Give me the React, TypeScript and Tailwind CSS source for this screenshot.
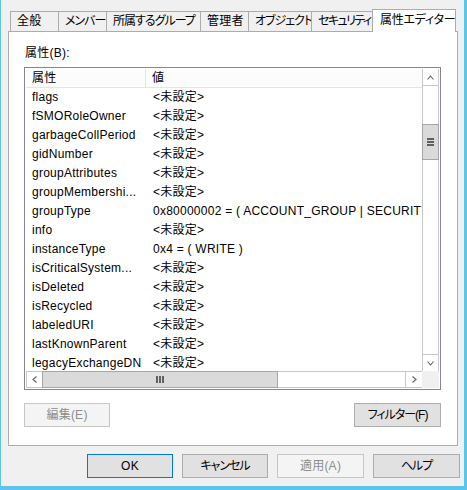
import React from "react";

const FONT = { fontFamily: '"Liberation Sans", "Noto Sans CJK JP", sans-serif' };

const tabs: { label: string; w: string; track?: string }[] = [
  { label: "全般", w: "w-[48px]" },
  { label: "メンバー", w: "w-[48px]", track: "tracking-[-1px]" },
  { label: "所属するグループ", w: "w-[94px]", track: "tracking-[-1px]" },
  { label: "管理者", w: "w-[48px]" },
  { label: "オブジェクト", w: "w-[63px]", track: "tracking-[-1px]" },
  { label: "セキュリティ", w: "w-[61px]", track: "tracking-[-1.6px]" },
];

const NOT_SET = "<未設定>";

const rows: [string, string][] = [
  ["flags", NOT_SET],
  ["fSMORoleOwner", NOT_SET],
  ["garbageCollPeriod", NOT_SET],
  ["gidNumber", NOT_SET],
  ["groupAttributes", NOT_SET],
  ["groupMembershi...", NOT_SET],
  ["groupType", "0x80000002 = ( ACCOUNT_GROUP | SECURITY_ENABLED )"],
  ["info", NOT_SET],
  ["instanceType", "0x4 = ( WRITE )"],
  ["isCriticalSystem...", NOT_SET],
  ["isDeleted", NOT_SET],
  ["isRecycled", NOT_SET],
  ["labeledURI", NOT_SET],
  ["lastKnownParent", NOT_SET],
  ["legacyExchangeDN", NOT_SET],
];

const Chevron: React.FC<{ dir: "up" | "down" | "left" | "right" }> = ({ dir }) => {
  const pts =
    dir === "up"
      ? "0.5,4.5 3.5,1 6.5,4.5"
      : dir === "down"
      ? "0.5,0.5 3.5,4 6.5,0.5"
      : dir === "left"
      ? "4.5,0.5 1,3.5 4.5,6.5"
      : "0.5,0.5 4,3.5 0.5,6.5";
  const vertical = dir === "up" || dir === "down";
  return (
    <svg
      width={vertical ? 7 : 5}
      height={vertical ? 5 : 7}
      viewBox={vertical ? "0 0 7 5" : "0 0 5 7"}
      fill="none"
      stroke="#606060"
      strokeWidth="1.1"
    >
      <polyline points={pts} />
    </svg>
  );
};

const Button: React.FC<{
  label: string;
  w: string;
  disabled?: boolean;
  primary?: boolean;
  tight?: boolean;
}> = ({ label, w, disabled, primary, tight }) => (
  <div
    className={`${w} h-[24px] flex items-center justify-center border text-[12px] ${
      tight ? "tracking-[-1px]" : ""
    } ${
      disabled
        ? "bg-[#f4f4f4] border-[#c6c6c6] text-[#8d8d8d]"
        : primary
        ? "bg-[#e1e1e1] border-[#0078d7] text-black"
        : "bg-[#e1e1e1] border-[#adadad] text-black"
    }`}
  >
    {label}
  </div>
);

export default function App() {
  return (
    <div
      style={FONT}
      className="w-[467px] h-[490px] bg-[#f0f0f0] border-l border-r-[3px] border-b-[4px] border-[#5fc4ea] flex flex-col text-black tracking-[0.25px] [font-feature-settings:'palt']"
    >
      {/* tabs */}
      <div className="h-[31px] pl-[9px] flex items-end">
        {tabs.map((t) => (
          <div
            key={t.label}
            className={`${t.w} h-[20px] border-t border-l border-[#acacac] bg-[#f0f0f0] pl-[6px] text-[12px] leading-[19px] whitespace-nowrap overflow-hidden ${
              t.track ?? ""
            }`}
          >
            {t.label}
          </div>
        ))}
        <div className="w-[84px] h-[23px] -mb-px relative z-10 border-t border-x border-[#acacac] bg-white pl-[7px] text-[12px] leading-[21px] whitespace-nowrap tracking-[-0.3px]">
          属性エディター
        </div>
      </div>

      {/* panel */}
      <div className="ml-[7px] w-[450px] h-[415px] border border-[#acacac] bg-white pl-[15px] pt-[13px] flex flex-col">
        <div className="pl-px text-[12px] leading-[16px]">属性(B):</div>

        <div className="mt-[6px] w-[417px] h-[323px] border border-[#828790] p-px flex flex-col">
          <div className="flex h-[302px]">
            {/* rows */}
            <div className="w-[396px] overflow-hidden">
              <div className="h-[19px] flex bg-[#fcfcfc] border-b border-[#e5e5e5] text-[12px] leading-[18px]">
                <div className="w-[120px] pl-[6px] border-r border-[#e5e5e5]">属性</div>
                <div className="pl-[6px]">値</div>
              </div>
              {rows.map(([name, val]) => (
                <div key={name} className="h-[19px] flex text-[12px] leading-[19px] whitespace-nowrap">
                  <div className="w-[121px] shrink-0 pl-[6px] overflow-hidden">{name}</div>
                  <div className="pl-[6px]">{val}</div>
                </div>
              ))}
            </div>
            {/* vertical scrollbar */}
            <div className="w-[17px] border-x border-[#c8c8c8] bg-white flex flex-col">
              <div className="h-[17px] border-b border-[#c8c8c8] flex items-center justify-center">
                <Chevron dir="up" />
              </div>
              <div className="h-[38px]" />
              <div className="h-[36px] -mx-px bg-[#dadada] border border-[#a6a6a6] flex flex-col items-center justify-center gap-px">
                <div className="w-[7px] h-[2px] bg-[#606060]" />
                <div className="w-[7px] h-[2px] bg-[#606060]" />
                <div className="w-[7px] h-[2px] bg-[#606060]" />
              </div>
              <div className="flex-1" />
              <div className="h-[17px] border-t border-[#c8c8c8] flex items-center justify-center">
                <Chevron dir="down" />
              </div>
            </div>
          </div>
          {/* horizontal scrollbar */}
          <div className="flex h-[17px]">
            <div className="w-[396px] border-y border-[#c8c8c8] bg-white flex">
              <div className="w-[17px] border-x border-[#c8c8c8] flex items-center justify-center">
                <Chevron dir="left" />
              </div>
              <div className="w-[236px] -my-px -ml-px bg-[#dadada] border border-[#a6a6a6] flex items-center justify-center gap-px">
                <div className="w-[2px] h-[7px] bg-[#606060]" />
                <div className="w-[2px] h-[7px] bg-[#606060]" />
                <div className="w-[2px] h-[7px] bg-[#606060]" />
              </div>
              <div className="flex-1" />
              <div className="w-[17px] border-l border-[#c8c8c8] flex items-center justify-center">
                <Chevron dir="right" />
              </div>
            </div>
            <div className="w-[17px] bg-[#f0f0f0]" />
          </div>
        </div>

        <div className="mt-[13px] w-[417px] flex justify-between">
          <Button label="編集(E)" w="w-[86px]" disabled />
          <Button label="フィルター(F)" w="w-[87px]" tight />
        </div>
      </div>

      {/* bottom buttons */}
      <div className="mt-[8px] pl-[86px] flex gap-[9px]">
        <Button label="OK" w="w-[86px]" primary />
        <Button label="キャンセル" w="w-[86px]" tight />
        <Button label="適用(A)" w="w-[87px]" disabled />
        <Button label="ヘルプ" w="w-[87px]" tight />
      </div>
    </div>
  );
}
